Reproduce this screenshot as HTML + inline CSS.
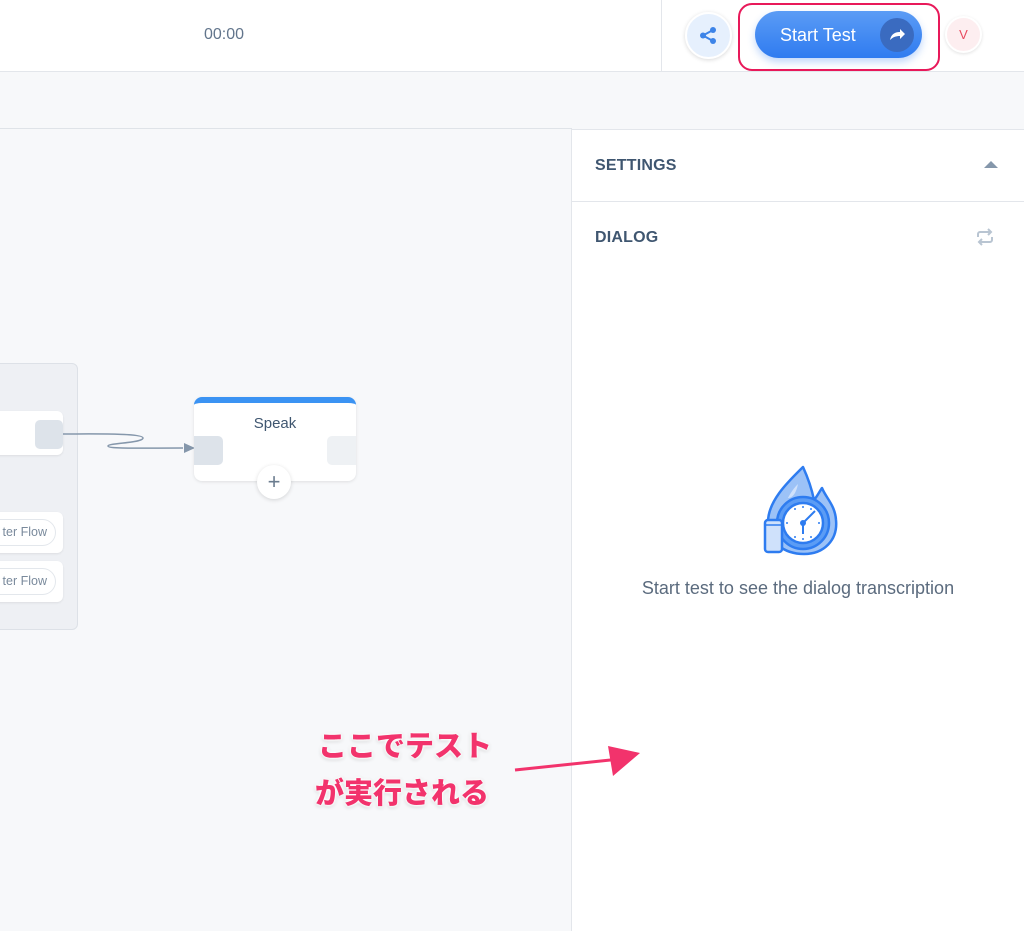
<!DOCTYPE html>
<html><head><meta charset="utf-8"><style>
*{margin:0;padding:0;box-sizing:border-box}
body{width:1024px;height:931px;overflow:hidden;font-family:"Liberation Sans",sans-serif;background:#f7f8fa;position:relative}
.abs{position:absolute}
.anno{font-family:"Liberation Sans","Noto Sans CJK JP",sans-serif;font-weight:900;font-size:29px;color:#f2336c;text-shadow:0 0 2px #fff,0 0 3px #fff,1px 1px 3px #fff,-1px -1px 3px #fff,0 1px 4px rgba(0,0,0,.3)}
</style></head><body>
<div class="abs" style="left:0;top:0;width:1024px;height:72px;background:#fff;border-bottom:1px solid #e3e6eb"></div>
<div class="abs" style="left:661px;top:0;width:1px;height:71px;background:#e3e6eb"></div>
<div class="abs" style="left:204px;top:26px;font-size:16px;color:#62758c">00:00</div>
<div class="abs" style="left:685px;top:12px;width:47px;height:47px;border-radius:50%;background:#e6f0fd;border:2px solid #fff;box-shadow:0 1px 4px rgba(0,0,0,.15)">
<svg width="43" height="43" viewBox="0 0 43 43"><g fill="#3d84e8"><circle cx="16" cy="21.5" r="3"/><circle cx="26" cy="16" r="3"/><circle cx="26" cy="27" r="3"/></g><path d="M16 21.5L26 16M16 21.5L26 27" stroke="#3d84e8" stroke-width="2"/></svg></div>
<div class="abs" style="left:738px;top:3px;width:202px;height:68px;border:2.5px solid #e8195a;border-radius:14px"></div>
<div class="abs" style="left:755px;top:11px;width:167px;height:47px;border-radius:24px;background:linear-gradient(#5b9cf5,#2f7bf0);box-shadow:0 4px 8px rgba(47,123,240,.3)">
<div class="abs" style="left:25px;top:14px;color:#fff;font-size:18px">Start Test</div>
<div class="abs" style="left:125px;top:7px;width:34px;height:34px;border-radius:50%;background:#3a6bc0">
<svg width="34" height="34" viewBox="0 0 34 34"><path d="M10 22c1-5 4-8 10-8v-3l5 5-5 5v-3c-4 0-7 1-10 4z" fill="#fff"/></svg></div></div>
<div class="abs" style="left:945px;top:16px;width:37px;height:37px;border-radius:50%;background:#fdeef0;border:2px solid #fff;box-shadow:0 1px 3px rgba(0,0,0,.12);color:#e84a5f;font-size:13px;text-align:center;line-height:33px">V</div>
<div class="abs" style="left:0;top:128px;width:572px;height:1px;background:#dfe3e8"></div>
<div class="abs" style="left:571px;top:129px;width:453px;height:802px;background:#fff;border-left:1px solid #e3e6eb;border-top:1px solid #e3e6eb"></div>
<div class="abs" style="left:595px;top:157px;font-size:16px;font-weight:bold;color:#3f5670;letter-spacing:.2px">SETTINGS</div>
<svg class="abs" style="left:984px;top:160px" width="14" height="9"><path d="M0 8L7 1L14 8Z" fill="#8597ab"/></svg>
<div class="abs" style="left:572px;top:201px;width:452px;height:1px;background:#e3e6eb"></div>
<div class="abs" style="left:595px;top:229px;font-size:16px;font-weight:bold;color:#3f5670;letter-spacing:.2px">DIALOG</div>
<svg class="abs" style="left:975px;top:228px" width="20" height="18" viewBox="0 0 20 18" fill="none" stroke="#b9c5d2" stroke-width="2"><path d="M3 9V6a2 2 0 0 1 2-2h11M13 1l3 3-3 3M17 9v3a2 2 0 0 1-2 2H4M7 17l-3-3 3-3"/></svg>
<svg class="abs" style="left:760px;top:460px" width="80" height="100" viewBox="0 0 80 100">
<path d="M43 7C30 20 8 40 8 62C8 82 24 94 44 94C64 94 78 80 76 60C75 45 66 38 62 28C58 34 56 38 54 40C52 30 48 18 43 7Z" fill="#9cc2f7" stroke="#2e7cf0" stroke-width="2.5" stroke-linejoin="round"/>
<path d="M28 38C32 30 36 26 38 24 36 34 32 38 28 38Z" fill="#cfe1fb"/>
<circle cx="43" cy="63" r="26" fill="#5b9cf5" stroke="#2e7cf0" stroke-width="2.5"/>
<circle cx="43" cy="63" r="20" fill="#fff" stroke="#2e7cf0" stroke-width="2.5"/>
<g fill="#2e7cf0"><circle cx="43" cy="47" r="1"/><circle cx="43" cy="79" r="1"/><circle cx="27" cy="63" r="1"/><circle cx="59" cy="63" r="1"/><circle cx="35" cy="49" r="1"/><circle cx="51" cy="49" r="1"/><circle cx="35" cy="77" r="1"/><circle cx="51" cy="77" r="1"/></g>
<path d="M43 63l12-12M43 63v11" stroke="#2e7cf0" stroke-width="2"/><circle cx="43" cy="63" r="3" fill="#2e7cf0"/>
<rect x="5" y="60" width="17" height="32" rx="3" fill="#cfe1fb" stroke="#2e7cf0" stroke-width="2.5"/>
<path d="M5 65h17" stroke="#2e7cf0" stroke-width="1.5"/>
</svg>
<div class="abs" style="left:572px;top:578px;width:452px;text-align:center;font-size:18px;color:#5b6b7e">Start test to see the dialog transcription</div>
<div class="abs" style="left:-10px;top:363px;width:88px;height:267px;border-radius:6px;background:#eef0f4;border:1px solid #dde1e7"></div>
<div class="abs" style="left:-10px;top:411px;width:73px;height:44px;border-radius:6px;background:#fff;box-shadow:0 1px 2px rgba(0,0,0,.08)"></div>
<div class="abs" style="left:35px;top:420px;width:28px;height:29px;border-radius:5px;background:#dde3ea"></div>
<div class="abs" style="left:-10px;top:512px;width:73px;height:41px;border-radius:6px;background:#fff;box-shadow:0 1px 2px rgba(0,0,0,.08)"></div>
<div class="abs" style="left:-30px;top:519px;width:86px;height:27px;border-radius:14px;border:1px solid #e3e7ec;background:#fff;font-size:12.5px;color:#7a8a9c;line-height:25px;text-align:right;padding-right:8px">ter Flow</div>
<div class="abs" style="left:-10px;top:561px;width:73px;height:41px;border-radius:6px;background:#fff;box-shadow:0 1px 2px rgba(0,0,0,.08)"></div>
<div class="abs" style="left:-30px;top:568px;width:86px;height:27px;border-radius:14px;border:1px solid #e3e7ec;background:#fff;font-size:12.5px;color:#7a8a9c;line-height:25px;text-align:right;padding-right:8px">ter Flow</div>
<svg class="abs" style="left:63px;top:425px" width="135" height="35"><path d="M0 9C30 9 80 8 80 13 80 18 45 18 45 21 45 24 80 23 120 23" fill="none" stroke="#8597ab" stroke-width="1.5"/><path d="M121 18L132 23 121 28Z" fill="#8597ab"/></svg>
<div class="abs" style="left:194px;top:397px;width:162px;height:84px;border-radius:8px;background:#fff;border-top:6px solid #3b93f3;box-shadow:0 1px 3px rgba(0,0,0,.1);overflow:hidden">
<div class="abs" style="left:0;top:12px;width:162px;text-align:center;font-size:15px;color:#3f5670">Speak</div>
<div class="abs" style="left:0;top:33px;width:29px;height:29px;border-radius:0 5px 5px 0;background:#dde3ea"></div>
<div class="abs" style="left:133px;top:33px;width:29px;height:29px;border-radius:5px 0 0 5px;background:#eef1f4"></div></div>
<div class="abs" style="left:257px;top:465px;width:34px;height:34px;border-radius:50%;background:#fff;box-shadow:0 1px 4px rgba(0,0,0,.15);text-align:center;line-height:33px;font-size:22px;color:#6b7c8f">+</div>
<div class="abs anno" style="left:318px;top:723px">ここでテスト</div>
<div class="abs anno" style="left:315px;top:770px">が実行される</div>
<svg class="abs" style="left:510px;top:738px" width="135" height="40"><path d="M5 32L110 21" stroke="#f2336c" stroke-width="3"/><path d="M98 8L130 15 103 38Z" fill="#f2336c"/></svg>
</body></html>
